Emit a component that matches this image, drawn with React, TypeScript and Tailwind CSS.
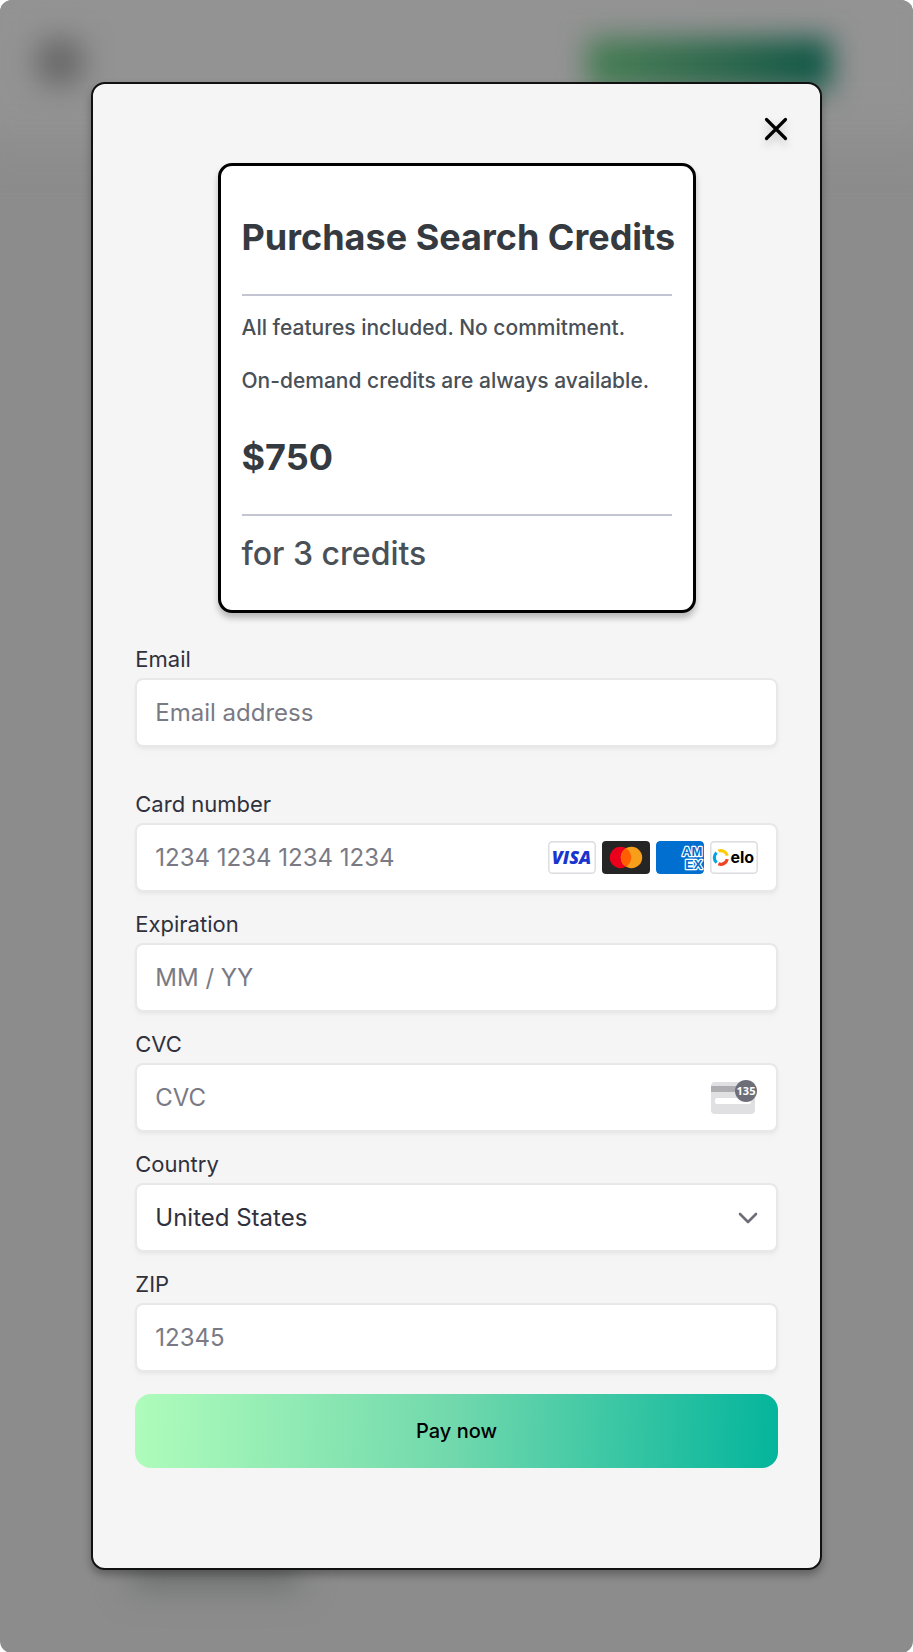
import type { ReactNode } from "react";

function Field({
  id,
  label,
  children,
}: {
  id: string;
  label: string;
  children: ReactNode;
}) {
  return (
    <div className="flex flex-col">
      <label htmlFor={id} className="mb-1.5 text-[22px] leading-[26px] text-[#30313d]">
        {label}
      </label>
      <div className="relative flex h-[69px] items-center rounded-lg border-2 border-[#e8e8e8] bg-white px-[18px] text-[24px] shadow-[0_2px_3px_rgba(0,0,0,0.04),0_5px_10px_rgba(0,0,0,0.02)]">
        {children}
      </div>
    </div>
  );
}

const inputClass =
  "h-full min-w-0 flex-1 bg-transparent text-[#30313d] outline-none placeholder:text-[#7a7a85]";

function VisaIcon() {
  return (
    <svg viewBox="0 0 48 33" className="h-[33px] w-12" aria-hidden="true">
      <rect x="0.8" y="0.8" width="46.4" height="31.4" rx="3.5" fill="#fff" stroke="#dcdce0" strokeWidth="1.4" />
      <text x="23.5" y="23" textAnchor="middle" fontFamily="Open Sans" fontWeight="800" fontStyle="italic" fontSize="18" fill="#1a35cf">
        VISA
      </text>
    </svg>
  );
}

function MastercardIcon() {
  return (
    <svg viewBox="0 0 48 33" className="h-[33px] w-12" aria-hidden="true">
      <rect width="48" height="33" rx="4" fill="#252525" />
      <circle cx="18.5" cy="16.5" r="10.7" fill="#eb001b" />
      <circle cx="29.5" cy="16.5" r="10.7" fill="#f79e1b" />
      <path d="M24 7.3a10.7 10.7 0 0 1 0 18.4a10.7 10.7 0 0 1 0-18.4z" fill="#ff5f00" />
    </svg>
  );
}

function AmexIcon() {
  return (
    <svg viewBox="0 0 48 33" className="h-[33px] w-12 rounded" aria-hidden="true">
      <rect width="48" height="33" rx="4" fill="#016fd0" />
      <text fontFamily="Liberation Sans" fontWeight="700" fontSize="13" fill="#016fd0" stroke="#fff" strokeWidth="2.4" paintOrder="stroke" strokeLinejoin="round">
        <tspan x="26" y="15">AM</tspan>
        <tspan x="29" y="28">EX</tspan>
      </text>
    </svg>
  );
}

function EloIcon() {
  return (
    <svg viewBox="0 0 48 33" className="h-[33px] w-12" aria-hidden="true">
      <rect x="0.8" y="0.8" width="46.4" height="31.4" rx="3.5" fill="#fff" stroke="#dcdce0" strokeWidth="1.4" />
      <g fill="none" strokeWidth="3.2">
        <path d="M8.4 10.1A6.6 6.6 0 0 1 17.3 14.6" stroke="#ffcb05" />
        <path d="M6.6 21.6A6.6 6.6 0 0 1 6.6 11.6" stroke="#00a4e0" />
        <path d="M17.3 18.2A6.6 6.6 0 0 1 8.4 22.8" stroke="#ef4123" />
      </g>
      <text x="20.5" y="22" fontFamily="Inter" fontWeight="700" fontSize="16" fill="#000">
        elo
      </text>
    </svg>
  );
}

function CvcIcon() {
  return (
    <svg viewBox="0 0 48 36" className="h-9 w-12" aria-hidden="true">
      <rect x="1" y="2" width="44" height="32" rx="4" fill="#e0e0e3" />
      <rect x="1" y="6" width="44" height="6" fill="#adadb2" />
      <rect x="5" y="18" width="36" height="6" rx="2" fill="#fff" />
      <circle cx="36" cy="11" r="11" fill="#6d6e78" />
      <text x="36" y="15" textAnchor="middle" fontFamily="Open Sans" fontWeight="700" fontSize="11" fill="#fff">
        135
      </text>
    </svg>
  );
}

export default function App() {
  return (
    <div className="bg-white font-[Inter,sans-serif]">
      <div className="relative overflow-hidden rounded-xl bg-[#8c8c8c] px-[10%] pt-[82px] pb-[83px]">
        <div className="absolute -inset-x-10 -top-10 h-[180px] bg-[#939393] blur-[24px]" />
        <div className="absolute top-[38px] left-[36px] h-[48px] w-[48px] rounded-2xl bg-[#6a6a6a] blur-[14px]" />
        <div className="absolute top-[38px] right-[82px] h-[52px] w-[244px] bg-linear-to-r from-[#4a7f55] to-[#0b5544] blur-[14px]" />
        <div className="absolute bottom-[64px] left-[130px] h-[40px] w-[170px] bg-[#6f7371] blur-[16px]" />

        <main
          role="dialog"
          aria-label="Purchase Search Credits"
          className="relative flex flex-col rounded-[14px] border-2 border-[#111] bg-[#f5f5f5] px-[42px] pt-[25px] pb-[100px] shadow-[0_5px_8px_rgba(0,0,0,0.3)]"
        >
          <button
            type="button"
            aria-label="Close"
            className="-mr-[18px] flex size-10 items-center justify-center self-end"
          >
            <svg viewBox="0 0 24 24" className="size-6 overflow-visible drop-shadow-[0_5px_4px_rgba(0,0,0,0.2)]" fill="none" stroke="#000" strokeWidth="3.2" strokeLinecap="round" aria-hidden="true">
              <path d="M2.5 2.5l19 19M21.5 2.5l-19 19" />
            </svg>
          </button>

          <section className="mt-3.5 mb-[33px] flex w-[478px] max-w-full flex-col self-center rounded-[14px] border-[3px] border-black bg-white px-[21px] pt-[47px] pb-[35px] text-[#495057] shadow-[0_5px_6px_rgba(0,0,0,0.25)]">
            <h1 className="text-[36px] leading-[48px] font-bold whitespace-nowrap text-[#343a40]">
              Purchase Search Credits
            </h1>
            <hr className="mt-[33px] mb-[17px] border-t-2 border-[#c3c5d3]" />
            <p className="text-[21px] leading-[30px] font-medium">All features included. No commitment.</p>
            <p className="mt-[23px] text-[21px] leading-[30px] font-medium">On-demand credits are always available.</p>
            <p className="mt-[37px] text-[36px] leading-[48px] font-bold text-[#343a40]">$750</p>
            <hr className="mt-[33px] mb-[17px] border-t-2 border-[#c3c5d3]" />
            <p className="text-[32px] leading-[42px] font-medium">for 3 credits</p>
          </section>

          <form className="flex flex-col" onSubmit={(e) => e.preventDefault()}>
            <Field id="email" label="Email">
              <input id="email" type="email" placeholder="Email address" className={inputClass} />
            </Field>
            <div className="mt-11 flex flex-col gap-[19px]">
              <Field id="card" label="Card number">
                <input id="card" inputMode="numeric" placeholder="1234 1234 1234 1234" className={inputClass} />
                <div className="flex gap-1.5">
                  <VisaIcon />
                  <MastercardIcon />
                  <AmexIcon />
                  <EloIcon />
                </div>
              </Field>
              <Field id="expiration" label="Expiration">
                <input id="expiration" placeholder="MM / YY" className={inputClass} />
              </Field>
              <Field id="cvc" label="CVC">
                <input id="cvc" inputMode="numeric" placeholder="CVC" className={inputClass} />
                <CvcIcon />
              </Field>
              <Field id="country" label="Country">
                <select id="country" className="h-full min-w-0 flex-1 appearance-none bg-transparent text-[#30313d] outline-none">
                  <option>United States</option>
                </select>
                <svg viewBox="0 0 20 12" className="pointer-events-none absolute right-[18px] h-3 w-5" fill="none" stroke="#6d6e78" strokeWidth="2.6" strokeLinecap="round" strokeLinejoin="round" aria-hidden="true">
                  <path d="M2 2l8 8 8-8" />
                </svg>
              </Field>
              <Field id="zip" label="ZIP">
                <input id="zip" inputMode="numeric" placeholder="12345" className={inputClass} />
              </Field>
            </div>
            <button
              type="submit"
              className="mt-[22px] h-[74px] rounded-2xl bg-linear-[92deg] from-[#affcbb] via-[#70d8ac] to-[#04b59c] text-[20px] font-medium text-black"
            >
              Pay now
            </button>
          </form>
        </main>
      </div>
    </div>
  );
}
